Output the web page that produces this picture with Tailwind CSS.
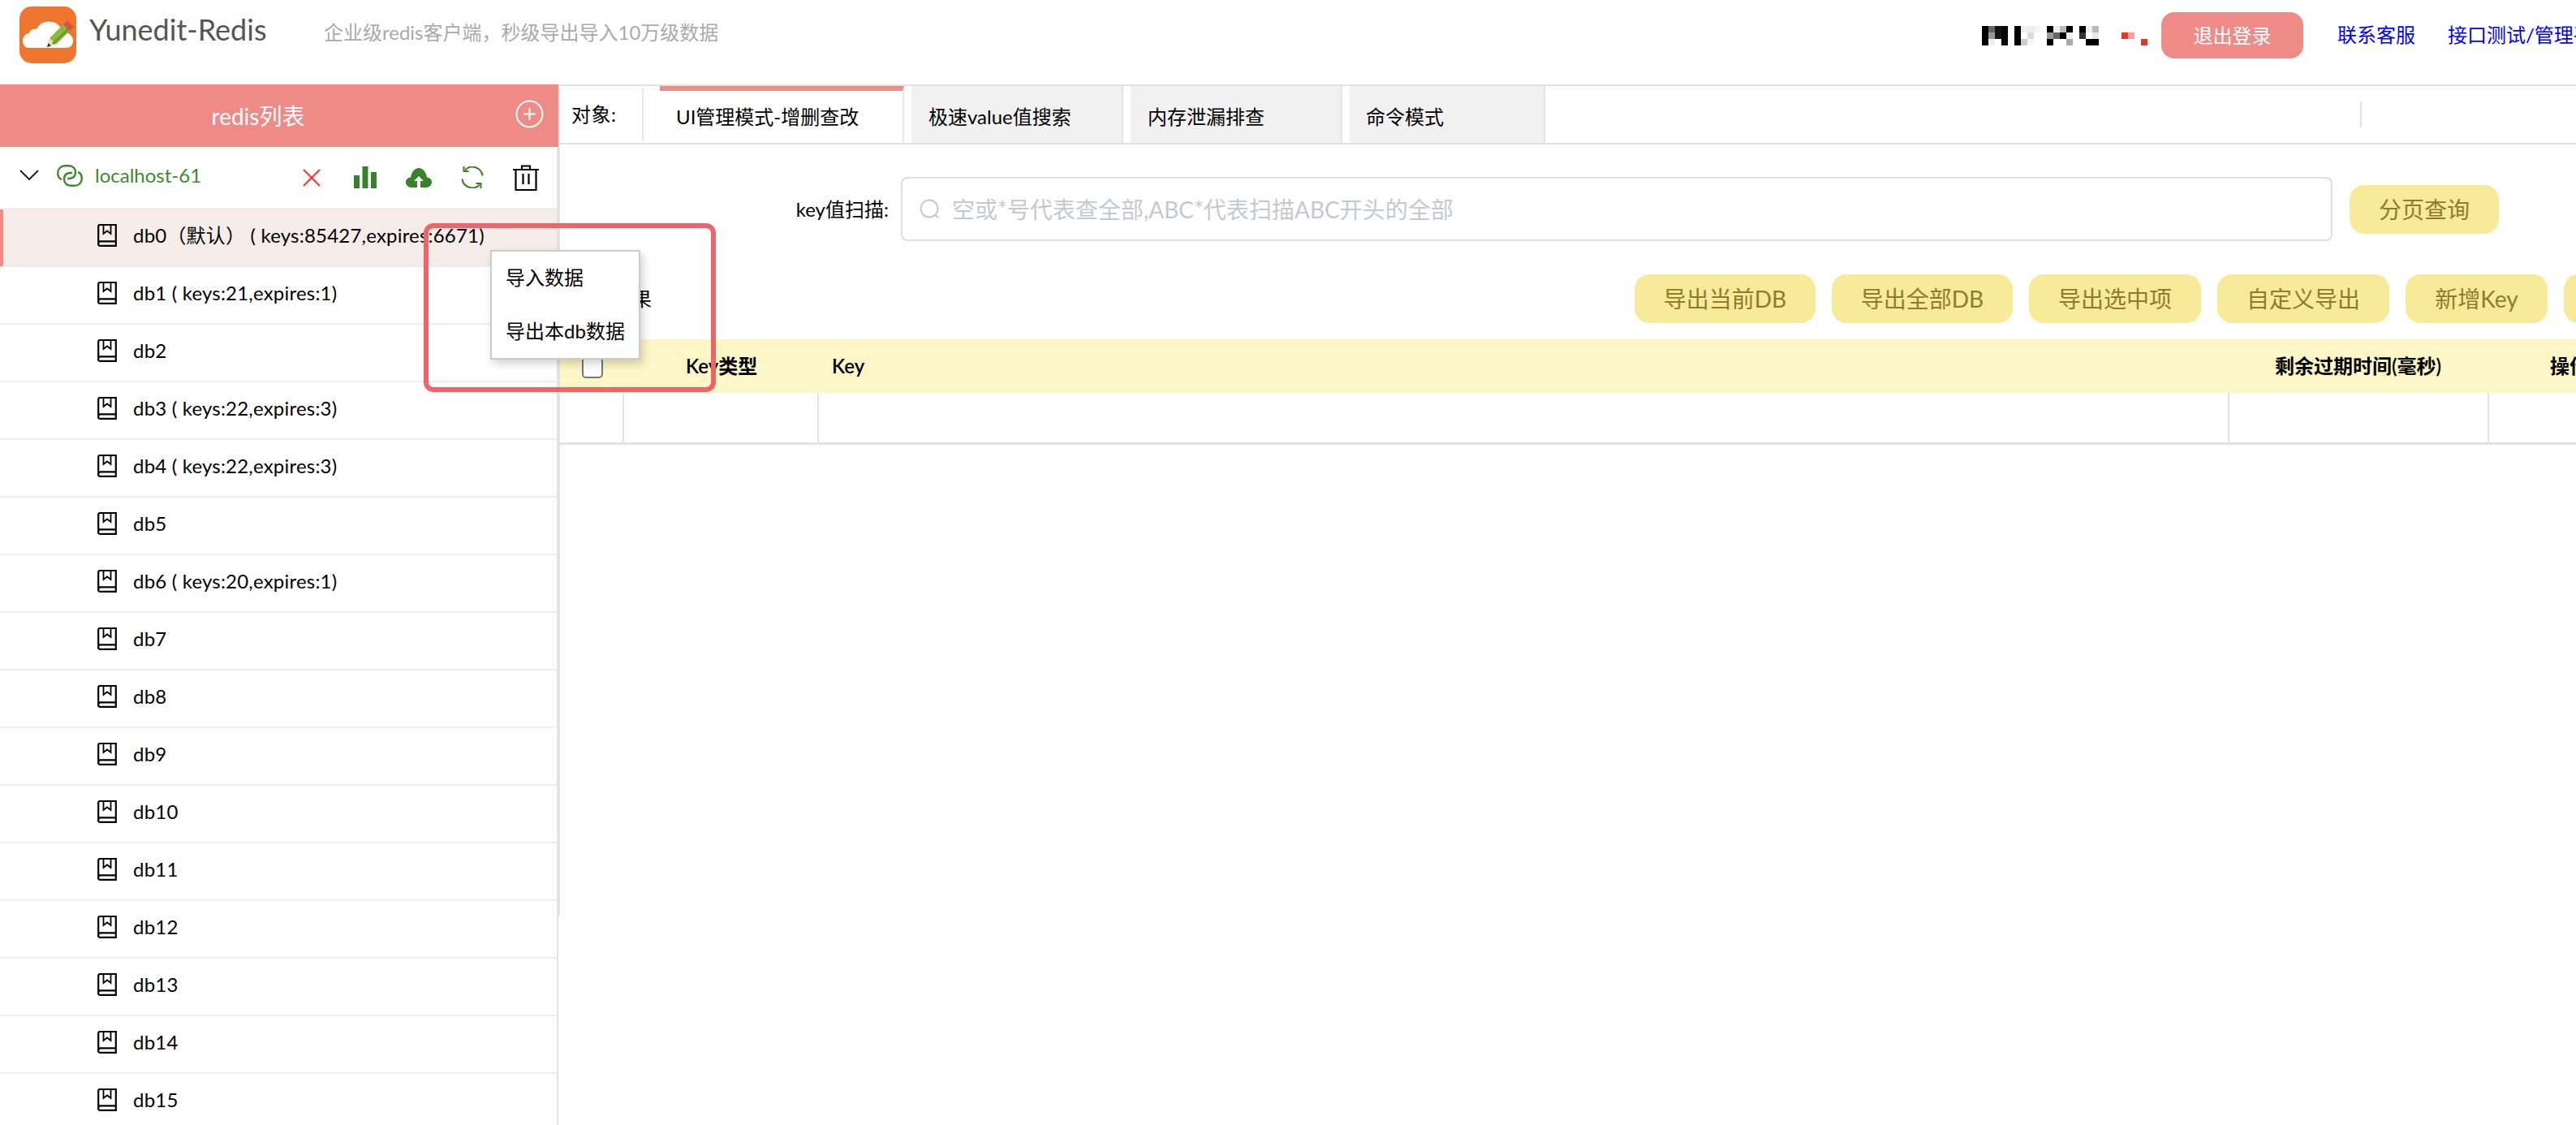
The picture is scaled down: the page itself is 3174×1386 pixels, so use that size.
<!DOCTYPE html>
<html lang="zh">
<head>
  <meta charset="UTF-8" />
  <title>Yunedit-Redis</title>
  <script src="https://cdn.jsdelivr.net/npm/@tailwindcss/browser@4"></script>
</head>
<body class="relative w-[3174px] h-[1386px] overflow-hidden bg-white text-black text-[24px] font-['Lato','Noto_Sans_CJK_SC',sans-serif]">

  <svg class="hidden">
    <symbol id="book" viewBox="0 0 24 28">
      <path d="M1.2 24V3a2 2 0 0 1 2-2h19.600v25.800H3.200a2 2 0 0 1-2-2.800a2.800 2.800 0 0 1 2-2.600h19.600" fill="none" stroke="#000" stroke-width="2.200" />
      <path d="M7.500 1v11l4.500-3.500 4.500 3.500V1" fill="none" stroke="#000" stroke-width="1.800" />
    </symbol>
  </svg>

  <!-- top bar -->
  <header class="flex h-[104px] whitespace-nowrap">
    <svg class="mt-2 ml-6 w-[70px] h-[70px] shrink-0" viewBox="0 0 70 70">
      <rect width="70" height="70" rx="15" fill="#ef762e" />
      <path d="M12 51C6 51 4 46 4 42c0-5 4-9 8-9 1-5 5-6 9-5 3-7 11-11 19-9 7 1 12 7 12 12 8 0 14 5 14 11 0 6-4 9-8 9Z" fill="#fff" />
      <path d="M34 50l3-11 8 8Z" fill="#e8d9b0" />
      <path d="M34 50l1.500-5 3.500 3.500Z" fill="#333" />
      <path d="M41 43L58 26" stroke="#8cb83c" stroke-width="11" />
      <path d="M41 46L60 28" stroke="#6d9a2b" stroke-width="3" />
      <path d="M58 26l5-5" stroke="#d9534a" stroke-width="11" />
    </svg>
    <div class="ml-4 mt-[12px] w-[289px] shrink-0 text-[36px] leading-[48px] text-[#555]">Yunedit-Redis</div>
    <div class="mt-[24px] w-[2043px] shrink-0 text-[24px] leading-[32px] text-[#aaa]">企业级redis客户端，秒级导出导入10万级数据</div>
    <svg class="mt-[32px] w-[208px] h-[24px] shrink-0" viewBox="0 0 208 24" shape-rendering="crispEdges">
      <rect x="0" y="0" width="8" height="24" fill="#000" />
      <rect x="8" y="0" width="8" height="8" fill="#666" /><rect x="8" y="8" width="8" height="8" fill="#999" /><rect x="8" y="16" width="8" height="8" fill="#eee" />
      <rect x="16" y="0" width="8" height="16" fill="#151515" />
      <rect x="24" y="0" width="8" height="24" fill="#0a0a0a" />
      <rect x="40" y="0" width="8" height="24" fill="#000" />
      <rect x="48" y="0" width="8" height="8" fill="#eee" /><rect x="48" y="16" width="8" height="8" fill="#ccc" />
      <rect x="56" y="0" width="8" height="8" fill="#eee" /><rect x="56" y="8" width="8" height="8" fill="#ddd" /><rect x="56" y="16" width="8" height="8" fill="#f8f8f8" />
      <rect x="64" y="0" width="8" height="8" fill="#f4f4f4" />
      <rect x="80" y="0" width="8" height="8" fill="#000" /><rect x="80" y="8" width="8" height="8" fill="#999" /><rect x="80" y="16" width="8" height="8" fill="#000" />
      <rect x="88" y="0" width="8" height="8" fill="#eee" /><rect x="88" y="8" width="8" height="8" fill="#666" />
      <rect x="96" y="0" width="8" height="8" fill="#bbb" /><rect x="96" y="8" width="8" height="8" fill="#000" />
      <rect x="104" y="0" width="8" height="8" fill="#000" /><rect x="104" y="8" width="8" height="8" fill="#eee" /><rect x="104" y="16" width="8" height="8" fill="#aaa" />
      <rect x="120" y="0" width="8" height="8" fill="#000" /><rect x="120" y="8" width="8" height="8" fill="#333" />
      <rect x="128" y="0" width="8" height="8" fill="#eee" /><rect x="128" y="16" width="8" height="8" fill="#000" />
      <rect x="136" y="0" width="8" height="8" fill="#bbb" /><rect x="136" y="8" width="8" height="8" fill="#e8e8e8" /><rect x="136" y="16" width="8" height="8" fill="#000" />
      <rect x="172" y="8" width="8" height="8" fill="#ee3322" /><rect x="180" y="8" width="8" height="8" fill="#f5a09a" />
      <rect x="196" y="16" width="8" height="8" fill="#ee3322" />
    </svg>
    <button class="mt-[15px] ml-[13px] w-[175px] h-[57px] shrink-0 rounded-[16px] bg-[#f08a87] text-white text-[24px]">退出登录</button>
    <a href="#" class="mt-[27px] ml-[42px] shrink-0 leading-[32px] text-[#0000ff]">联系客服</a>
    <a href="#" class="mt-[27px] ml-[40px] shrink-0 leading-[32px] text-[#0000ff]">接口测试/管理平台</a>
  </header>

  <main class="flex h-[1282px]">
    <!-- redis list -->
    <aside class="w-[688px] shrink-0 flex flex-col">
      <div class="relative h-[77px] shrink-0 flex items-center justify-center bg-[#f08a87] text-white text-[28px]">
        <span class="mr-[52px]">redis列表</span>
        <svg class="absolute right-[18px] top-[19px] w-[35px] h-[35px]" viewBox="0 0 35 35" fill="none" stroke="#fff" stroke-width="2">
          <circle cx="17.500" cy="17.500" r="16" /><path d="M17.500 10v15M10 17.500h15" />
        </svg>
      </div>
      <div class="flex-1 border-r-2 border-[#e2e2e2] tracking-[0.2px]">
        <div class="flex items-center h-[77px] border-b-2 border-[#eee]">
          <svg class="ml-6 w-6 h-[13px] shrink-0 -mt-[6px]" viewBox="0 0 24 13" fill="none" stroke="#222" stroke-width="2"><path d="M1 1l11 11L23 1" /></svg>
          <svg class="ml-[22px] w-8 h-[27px] shrink-0 -mt-[4px]" viewBox="0 0 32 27" fill="none" stroke="#3c8a2e" stroke-width="2.400">
            <path d="M6 18C3 17 1.200 14 1.200 10 1.200 5 5 1.200 10 1.200h5c5 0 8 3.800 8 7.800 0 5-3 8-8 8h-2" />
            <path d="M26 9c3 1 4.800 4 4.800 8 0 5-3.800 8.800-8.800 8.800h-5c-5 0-8-3.800-8-7.800 0-5 3-8 8-8h2" />
          </svg>
          <span class="ml-[15px] w-[256px] -mt-[6px] tracking-normal text-[#3c8a2e]">localhost-61</span>
          <!-- close -->
          <svg class="w-[22px] h-[22px] shrink-0" viewBox="0 0 22 22" stroke="#ee3b2b" stroke-width="2.200"><path d="M1 1l20 20M21 1L1 21" /></svg>
          <!-- stats -->
          <svg class="ml-[41px] w-[28px] h-[27px] shrink-0" viewBox="0 0 28 27" fill="#38812a"><rect y="11" width="7" height="16" /><rect x="10.500" width="7" height="27" /><rect x="21" y="7" width="7" height="20" /></svg>
          <!-- upload -->
          <svg class="ml-[36px] w-[32px] h-[24px] shrink-0" viewBox="0 0 32 24">
            <path d="M7 24C3 24 0 21 0 17.500 0 14 3 11.500 6 11.500 7 5 11 0 16 0c5 0 9 5 10 11.500 3 0 6 2.500 6 6C32 21 29 24 25 24Z" fill="#38812a" />
            <path d="M16 10l-6 6h4v8h4v-8h4Z" fill="#fff" />
          </svg>
          <!-- refresh -->
          <svg class="ml-[36px] w-[28px] h-[27px] shrink-0" viewBox="0 0 28 27" fill="none" stroke="#38812a" stroke-width="2">
            <path d="M5 4.500A12.500 12.500 0 0 1 26.500 11.500" /><path d="M23 22.500A12.500 12.500 0 0 1 1.500 15.500" />
            <path d="M3.500 0v6h6" /><path d="M24.500 27v-6h-6" />
          </svg>
          <!-- delete -->
          <svg class="ml-[36px] w-[32px] h-[32px] shrink-0" viewBox="0 0 32 32" fill="none" stroke="#000" stroke-width="2.200">
            <path d="M0 6h32M11 6V1.500h10V6M3.500 6v25h25V6M12.500 11v13M19.500 11v13" />
          </svg>
        </div>

        <div class="flex items-center h-[71px] pb-[6px] pl-[116px] border-l-4 border-l-[#f08a87] border-b-2 border-b-[#f3e9e4] bg-[#f7ede8]">
          <svg class="w-6 h-7 shrink-0"><use href="#book" /></svg><span class="ml-5 whitespace-nowrap">db0（默认） ( keys:85427,expires:6671)</span>
        </div>
        <div class="flex items-center h-[71px] pb-[6px] pl-[120px] border-b-2 border-[#eee]"><svg class="w-6 h-7 shrink-0"><use href="#book" /></svg><span class="ml-5">db1 ( keys:21,expires:1)</span></div>
        <div class="flex items-center h-[71px] pb-[6px] pl-[120px] border-b-2 border-[#eee]"><svg class="w-6 h-7 shrink-0"><use href="#book" /></svg><span class="ml-5">db2</span></div>
        <div class="flex items-center h-[71px] pb-[6px] pl-[120px] border-b-2 border-[#eee]"><svg class="w-6 h-7 shrink-0"><use href="#book" /></svg><span class="ml-5">db3 ( keys:22,expires:3)</span></div>
        <div class="flex items-center h-[71px] pb-[6px] pl-[120px] border-b-2 border-[#eee]"><svg class="w-6 h-7 shrink-0"><use href="#book" /></svg><span class="ml-5">db4 ( keys:22,expires:3)</span></div>
        <div class="flex items-center h-[71px] pb-[6px] pl-[120px] border-b-2 border-[#eee]"><svg class="w-6 h-7 shrink-0"><use href="#book" /></svg><span class="ml-5">db5</span></div>
        <div class="flex items-center h-[71px] pb-[6px] pl-[120px] border-b-2 border-[#eee]"><svg class="w-6 h-7 shrink-0"><use href="#book" /></svg><span class="ml-5">db6 ( keys:20,expires:1)</span></div>
        <div class="flex items-center h-[71px] pb-[6px] pl-[120px] border-b-2 border-[#eee]"><svg class="w-6 h-7 shrink-0"><use href="#book" /></svg><span class="ml-5">db7</span></div>
        <div class="flex items-center h-[71px] pb-[6px] pl-[120px] border-b-2 border-[#eee]"><svg class="w-6 h-7 shrink-0"><use href="#book" /></svg><span class="ml-5">db8</span></div>
        <div class="flex items-center h-[71px] pb-[6px] pl-[120px] border-b-2 border-[#eee]"><svg class="w-6 h-7 shrink-0"><use href="#book" /></svg><span class="ml-5">db9</span></div>
        <div class="flex items-center h-[71px] pb-[6px] pl-[120px] border-b-2 border-[#eee]"><svg class="w-6 h-7 shrink-0"><use href="#book" /></svg><span class="ml-5">db10</span></div>
        <div class="flex items-center h-[71px] pb-[6px] pl-[120px] border-b-2 border-[#eee]"><svg class="w-6 h-7 shrink-0"><use href="#book" /></svg><span class="ml-5">db11</span></div>
        <div class="flex items-center h-[71px] pb-[6px] pl-[120px] border-b-2 border-[#eee]"><svg class="w-6 h-7 shrink-0"><use href="#book" /></svg><span class="ml-5">db12</span></div>
        <div class="flex items-center h-[71px] pb-[6px] pl-[120px] border-b-2 border-[#eee]"><svg class="w-6 h-7 shrink-0"><use href="#book" /></svg><span class="ml-5">db13</span></div>
        <div class="flex items-center h-[71px] pb-[6px] pl-[120px] border-b-2 border-[#eee]"><svg class="w-6 h-7 shrink-0"><use href="#book" /></svg><span class="ml-5">db14</span></div>
        <div class="flex items-center h-[71px] pb-[6px] pl-[120px] border-b-2 border-[#eee]"><svg class="w-6 h-7 shrink-0"><use href="#book" /></svg><span class="ml-5">db15</span></div>
      </div>
    </aside>

    <div class="w-[2px] h-[1025px] shrink-0 bg-[#e2e2e2]"></div>

    <!-- content -->
    <section class="flex-1 min-w-0 whitespace-nowrap">
      <!-- tabs -->
      <div class="flex h-[74px] border-y-2 border-[#e2e2e2]">
        <div class="w-[103px] shrink-0 pl-[14px] h-[66px] mt-[2px] flex items-center border-r-2 border-[#e8e8e8] -mb-[2px] tracking-[0.5px]">对象:</div>
        <div class="ml-[20px] w-[301px] shrink-0 pl-[20px] flex items-center border-t-[6px] border-t-[#f08a87] border-r-2 border-r-[#e8e8e8]">UI管理模式-增删查改</div>
        <div class="ml-[9px] w-[261px] shrink-0 pl-[21px] pt-[6px] flex items-center bg-[#f1f1f1] border-r-2 border-[#e4e4e4]">极速value值搜索</div>
        <div class="ml-[9px] w-[261px] shrink-0 pl-[21px] pt-[6px] flex items-center bg-[#f1f1f1] border-r-2 border-[#e4e4e4]">内存泄漏排查</div>
        <div class="ml-[9px] w-[241px] shrink-0 pl-[20px] pt-[6px] flex items-center bg-[#f1f1f1] border-r-2 border-[#e4e4e4]">命令模式</div>
        <div class="ml-[1004px] mt-[19px] w-[2px] h-[32px] shrink-0 bg-[#e2e2e2]"></div>
      </div>

      <!-- search -->
      <div class="flex items-center mt-[40px] h-[79px]">
        <label class="w-[405px] shrink-0 text-right">key值扫描:</label>
        <div class="ml-[15px] w-[1764px] h-[79px] shrink-0 flex items-center pl-[21px] rounded-[8px] border-2 border-[#dcdee6] text-[#c5c8d0] text-[28px]">
          <svg class="w-[26px] h-[26px] shrink-0" viewBox="0 0 26 26" fill="none" stroke="#c5c8d0" stroke-width="2"><circle cx="12" cy="12" r="10.500" /><path d="M19.500 19.500l4 4" /></svg>
          <span class="ml-[14px]">空或*号代表查全部,ABC*代表扫描ABC开头的全部</span>
        </div>
        <button class="ml-[21px] w-[184px] h-[60px] shrink-0 rounded-[18px] bg-[#f7ea98] text-[#8e7b2e] text-[28px]">分页查询</button>
      </div>

      <!-- actions -->
      <div class="flex items-center mt-[41px] h-[60px]">
        <span class="ml-[17px] w-[1307px] shrink-0">查询结果</span>
        <div class="flex gap-5 text-[28px] text-[#8e7b2e]">
          <button class="w-[223px] h-[60px] shrink-0 rounded-[18px] bg-[#f7ea98]">导出当前DB</button>
          <button class="w-[223px] h-[60px] shrink-0 rounded-[18px] bg-[#f7ea98]">导出全部DB</button>
          <button class="w-[212px] h-[60px] shrink-0 rounded-[18px] bg-[#f7ea98]">导出选中项</button>
          <button class="w-[212px] h-[60px] shrink-0 rounded-[18px] bg-[#f7ea98]">自定义导出</button>
          <button class="w-[175px] h-[60px] shrink-0 rounded-[18px] bg-[#f7ea98]">新增Key</button>
          <button class="w-[175px] h-[60px] shrink-0 rounded-[18px] bg-[#f7ea98]"></button>
        </div>
      </div>

      <!-- key table -->
      <div class="mt-[20px] w-[2578px]">
        <div class="grid grid-cols-[79px_240px_1738px_320px_201px] h-[66px] items-center bg-[#fdf6c6] font-semibold">
          <div class="pl-[27px] flex"><input type="checkbox" class="appearance-none w-[26px] h-[26px] mt-[3px] rounded-[5px] border-2 border-[#767676] bg-white" /></div>
          <div class="pl-[76px]">Key类型</div>
          <div class="pl-[16px]">Key</div>
          <div class="pl-[56px]">剩余过期时间(毫秒)</div>
          <div class="pl-[75px]">操作</div>
        </div>
        <div class="grid grid-cols-[79px_240px_1738px_320px_201px] h-[64px] border-b-[3px] border-[#e2e2e2]">
          <div class="border-r-2 border-[#e2e2e2]"></div>
          <div class="border-r-2 border-[#e2e2e2]"></div>
          <div class="border-r-2 border-[#e2e2e2]"></div>
          <div class="border-r-2 border-[#e2e2e2]"></div>
          <div></div>
        </div>
      </div>
    </section>
  </main>

  <!-- context menu and annotation, over the page -->
  <div class="absolute left-[604px] top-[308px] w-[185px] h-[135px] pl-[17px] pt-[16px] bg-white border-2 border-[#ccc] shadow-[3px_5px_10px_rgba(0,0,0,0.18)] flex flex-col gap-[34px] leading-[32px]">
    <div>导入数据</div>
    <div class="whitespace-nowrap">导出本db数据</div>
  </div>
  <div class="absolute left-[522px] top-[275px] w-[360px] h-[208px] rounded-[12px] border-[6px] border-[#f0636b]"></div>
</body>
</html>
